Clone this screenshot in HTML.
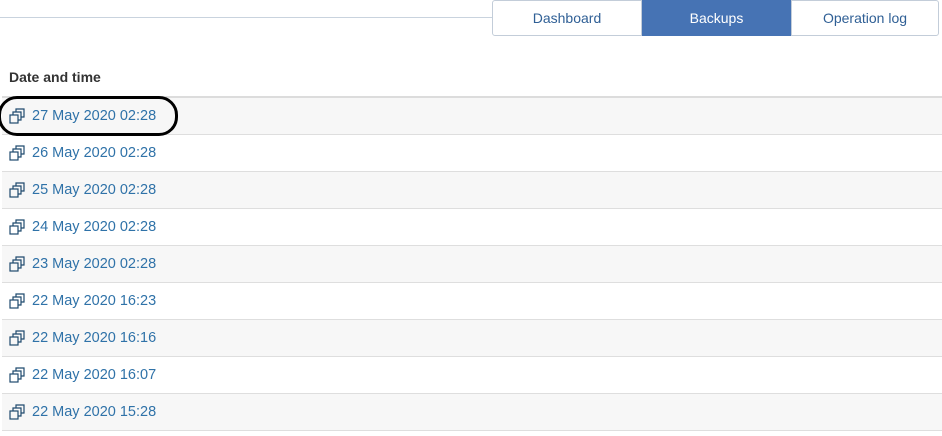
<!DOCTYPE html>
<html><head><style>
body{margin:0;width:942px;height:436px;background:#fff;font-family:"Liberation Sans",sans-serif;position:relative;overflow:hidden}
.topline{position:absolute;left:0;top:17px;width:493px;height:1px;background:#c9d3de}
.tabs{position:absolute;left:492px;top:0;display:flex}
.tab{height:34px;border:1px solid #c3cdd9;line-height:34px;text-align:center;font-size:14px;color:#2f5f95;background:#fff;box-sizing:content-box}
.tab.a{background:#4673b4;color:#fff;border-color:#4673b4}
.hdr{position:absolute;left:9px;top:69px;font-size:14px;font-weight:bold;color:#333}
.tbl{position:absolute;left:2px;top:96px;width:940px;border-top:2px solid #dcdcdc}
.row{height:36px;border-bottom:1px solid #dedede;display:flex;align-items:center;font-size:14.5px;color:#2f72a8}
.row:nth-child(odd){background:#f7f7f7}
.row svg{margin:0 6px 0 7px}
.ell{position:absolute;left:-2px;top:96px;width:174px;height:34px;border:3.5px solid #000;border-radius:19px}
</style></head><body>
<div class="topline"></div>
<div class="tabs">
<div class="tab" style="width:148px;border-radius:3px 0 0 3px">Dashboard</div>
<div class="tab a" style="width:147px">Backups</div>
<div class="tab" style="width:146px;border-radius:0 3px 3px 0">Operation log</div>
</div>
<div class="hdr">Date and time</div>
<div class="tbl">
<div class="row"><svg width="17" height="17" viewBox="0 0 17 17" fill="none" stroke="#1f4a6e" stroke-width="1.2"><rect x="1" y="7" width="8" height="8"/><path d="M4 7V4h8v8H9M7 4V1h8v8h-3"/></svg>27 May 2020 02:28</div>
<div class="row"><svg width="17" height="17" viewBox="0 0 17 17" fill="none" stroke="#1f4a6e" stroke-width="1.2"><rect x="1" y="7" width="8" height="8"/><path d="M4 7V4h8v8H9M7 4V1h8v8h-3"/></svg>26 May 2020 02:28</div>
<div class="row"><svg width="17" height="17" viewBox="0 0 17 17" fill="none" stroke="#1f4a6e" stroke-width="1.2"><rect x="1" y="7" width="8" height="8"/><path d="M4 7V4h8v8H9M7 4V1h8v8h-3"/></svg>25 May 2020 02:28</div>
<div class="row"><svg width="17" height="17" viewBox="0 0 17 17" fill="none" stroke="#1f4a6e" stroke-width="1.2"><rect x="1" y="7" width="8" height="8"/><path d="M4 7V4h8v8H9M7 4V1h8v8h-3"/></svg>24 May 2020 02:28</div>
<div class="row"><svg width="17" height="17" viewBox="0 0 17 17" fill="none" stroke="#1f4a6e" stroke-width="1.2"><rect x="1" y="7" width="8" height="8"/><path d="M4 7V4h8v8H9M7 4V1h8v8h-3"/></svg>23 May 2020 02:28</div>
<div class="row"><svg width="17" height="17" viewBox="0 0 17 17" fill="none" stroke="#1f4a6e" stroke-width="1.2"><rect x="1" y="7" width="8" height="8"/><path d="M4 7V4h8v8H9M7 4V1h8v8h-3"/></svg>22 May 2020 16:23</div>
<div class="row"><svg width="17" height="17" viewBox="0 0 17 17" fill="none" stroke="#1f4a6e" stroke-width="1.2"><rect x="1" y="7" width="8" height="8"/><path d="M4 7V4h8v8H9M7 4V1h8v8h-3"/></svg>22 May 2020 16:16</div>
<div class="row"><svg width="17" height="17" viewBox="0 0 17 17" fill="none" stroke="#1f4a6e" stroke-width="1.2"><rect x="1" y="7" width="8" height="8"/><path d="M4 7V4h8v8H9M7 4V1h8v8h-3"/></svg>22 May 2020 16:07</div>
<div class="row"><svg width="17" height="17" viewBox="0 0 17 17" fill="none" stroke="#1f4a6e" stroke-width="1.2"><rect x="1" y="7" width="8" height="8"/><path d="M4 7V4h8v8H9M7 4V1h8v8h-3"/></svg>22 May 2020 15:28</div>
</div>
<div class="ell"></div>
</body></html>
